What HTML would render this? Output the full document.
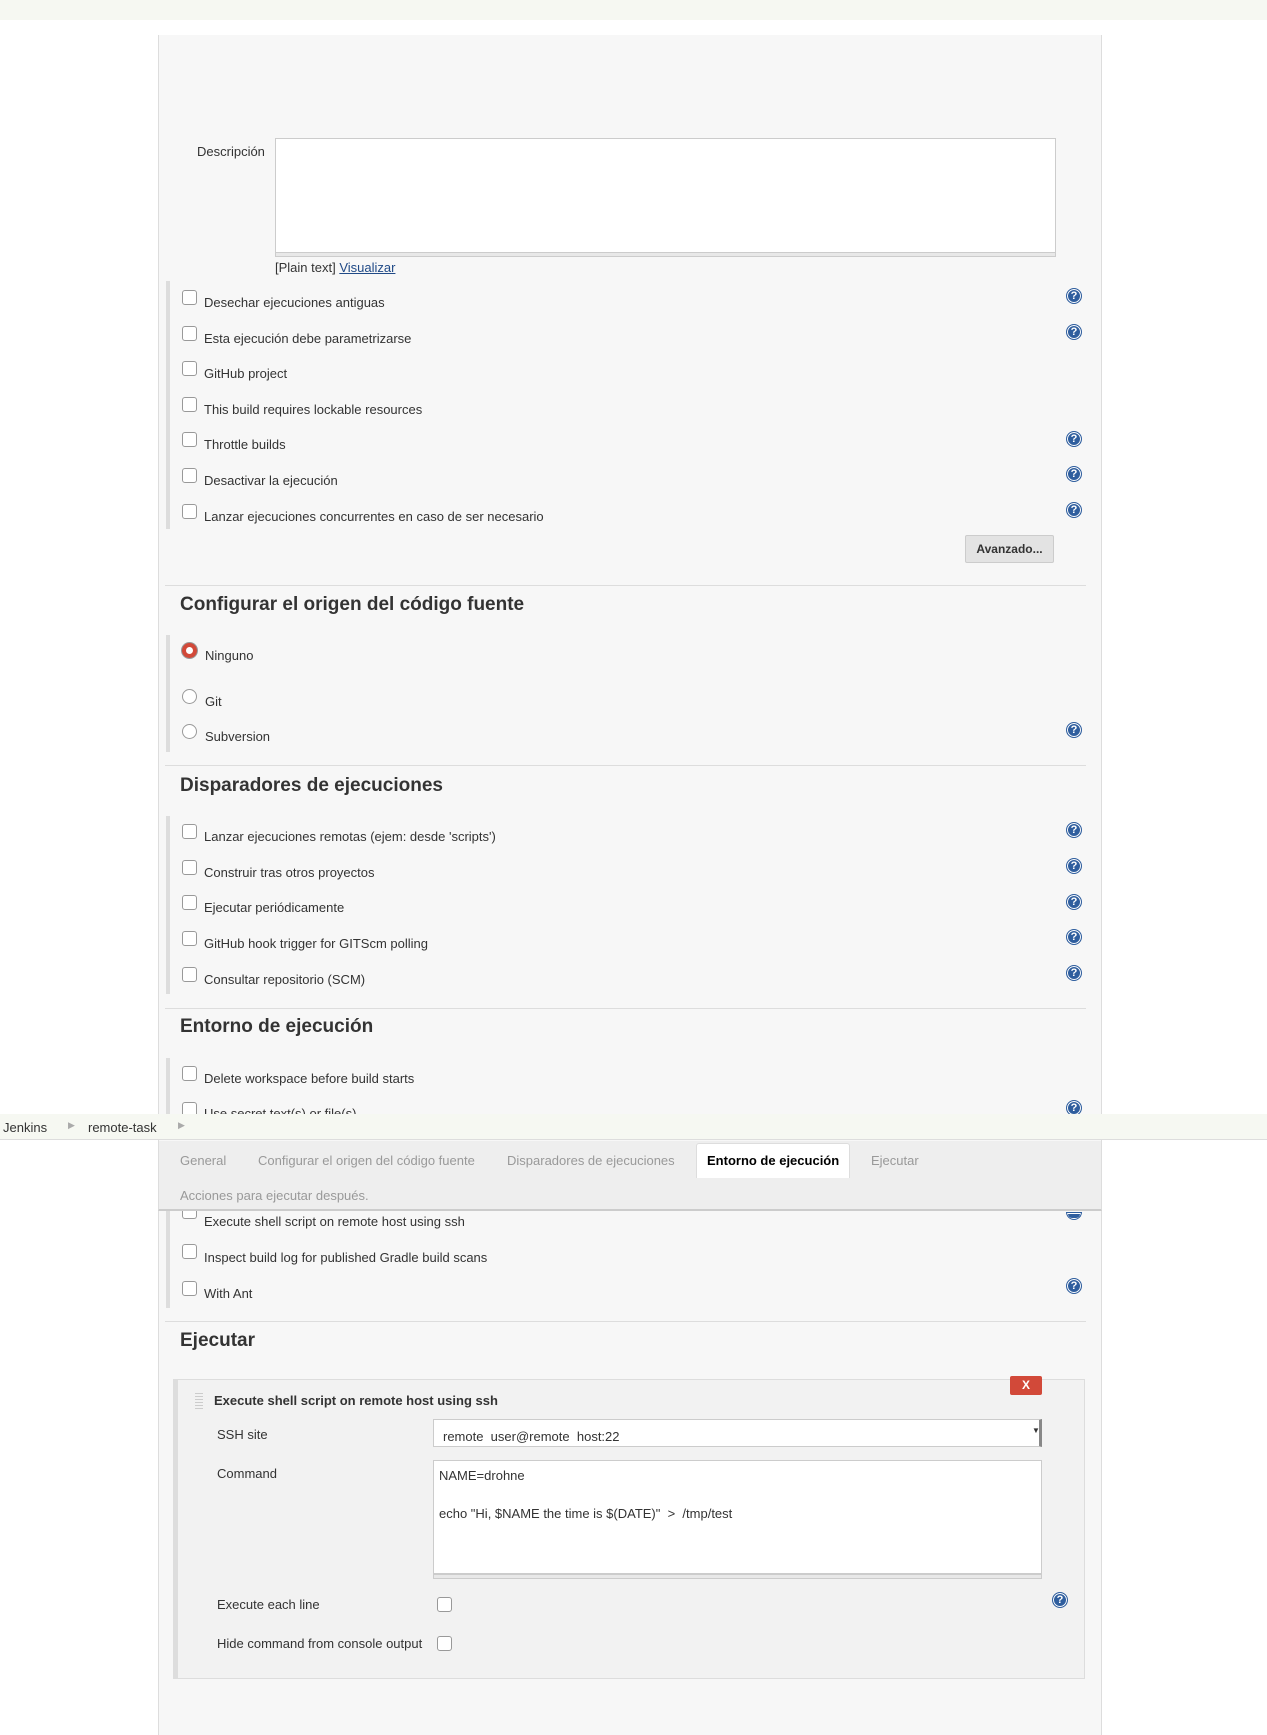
<!DOCTYPE html>
<html><head><meta charset="utf-8"><style>
*{box-sizing:border-box}
body{margin:0;width:1267px;height:1667px;overflow:hidden;background:#fff;font-family:"Liberation Sans",sans-serif;font-size:13px;color:#333;position:relative}
.a{position:absolute}
.top{left:0;top:0;width:1267px;height:20px;background:#f6f8f2}
.panel{left:158px;top:35px;width:944px;height:1700px;background:#f7f7f7;border-left:1px solid #ddd;border-right:1px solid #ddd}
.cb{width:15px;height:15px;border:1px solid #999;border-radius:3px;background:#fff}
.rd{width:15px;height:15px;border:1px solid #999;border-radius:50%;background:#fff}
.help{width:16px;height:16px;border-radius:50%;background:#2f5e9e;border:1px solid #2f5e9e;box-shadow:inset 0 0 0 1px #fff;color:#fff;font-size:11px;font-weight:bold;text-align:center;line-height:14px}
.bar{background:#ddd;width:4px}
.hr{left:165px;width:921px;height:1px;background:#ddd}
h2{position:absolute;margin:0;font-size:19px;font-weight:bold;color:#333}
.ta{background:#fff;border:1px solid #ccc}
</style></head><body>
<div class="a top"></div>
<div class="a panel"></div>
<div class="a" style="left:197px;top:144px">Descripción</div>
<div class="a ta" style="left:275px;top:138px;width:781px;height:118px"></div>
<div class="a" style="left:275px;top:252px;width:781px;height:5px;background:#e8e8e8;border:1px solid #ccc"></div>
<div class="a" style="left:275px;top:260px">[Plain text] <span style="color:#204a87;text-decoration:underline">Visualizar</span></div>
<div class="a bar" style="left:166px;top:281px;height:248px"></div>
<div class="a bar" style="left:166px;top:635px;height:117px"></div>
<div class="a bar" style="left:166px;top:816px;height:178px"></div>
<div class="a bar" style="left:166px;top:1058px;height:60px"></div>
<div class="a bar" style="left:166px;top:1211px;height:97px"></div>

<div class="a cb" style="left:182px;top:290px"></div><div class="a" style="left:204px;top:295px">Desechar ejecuciones antiguas</div><div class="a help" style="left:1066px;top:288px">?</div>
<div class="a cb" style="left:182px;top:326px"></div><div class="a" style="left:204px;top:331px">Esta ejecución debe parametrizarse</div><div class="a help" style="left:1066px;top:324px">?</div>
<div class="a cb" style="left:182px;top:361px"></div><div class="a" style="left:204px;top:366px">GitHub project</div>
<div class="a cb" style="left:182px;top:397px"></div><div class="a" style="left:204px;top:402px">This build requires lockable resources</div>
<div class="a cb" style="left:182px;top:432px"></div><div class="a" style="left:204px;top:437px">Throttle builds</div><div class="a help" style="left:1066px;top:431px">?</div>
<div class="a cb" style="left:182px;top:468px"></div><div class="a" style="left:204px;top:473px">Desactivar la ejecución</div><div class="a help" style="left:1066px;top:466px">?</div>
<div class="a cb" style="left:182px;top:504px"></div><div class="a" style="left:204px;top:509px">Lanzar ejecuciones concurrentes en caso de ser necesario</div><div class="a help" style="left:1066px;top:502px">?</div>
<div class="a" style="left:965px;top:535px;width:89px;height:28px;background:#e3e3e3;border:1px solid #ccc;border-radius:2px;font-weight:bold;font-size:12px;text-align:center;line-height:26px">Avanzado...</div>

<div class="a hr" style="top:585px"></div>
<h2 style="left:180px;top:594px">Configurar el origen del código fuente</h2>
<div class="a rd" style="left:182px;top:643px;border:4px solid #d24939;box-shadow:0 0 0 1px #999"></div><div class="a" style="left:205px;top:648px">Ninguno</div>
<div class="a rd" style="left:182px;top:689px"></div><div class="a" style="left:205px;top:694px">Git</div>
<div class="a rd" style="left:182px;top:724px"></div><div class="a" style="left:205px;top:729px">Subversion</div><div class="a help" style="left:1066px;top:722px">?</div>

<div class="a hr" style="top:765px"></div>
<h2 style="left:180px;top:775px">Disparadores de ejecuciones</h2>
<div class="a cb" style="left:182px;top:824px"></div><div class="a" style="left:204px;top:829px">Lanzar ejecuciones remotas (ejem: desde 'scripts')</div><div class="a help" style="left:1066px;top:822px">?</div>
<div class="a cb" style="left:182px;top:860px"></div><div class="a" style="left:204px;top:865px">Construir tras otros proyectos</div><div class="a help" style="left:1066px;top:858px">?</div>
<div class="a cb" style="left:182px;top:895px"></div><div class="a" style="left:204px;top:900px">Ejecutar periódicamente</div><div class="a help" style="left:1066px;top:894px">?</div>
<div class="a cb" style="left:182px;top:931px"></div><div class="a" style="left:204px;top:936px">GitHub hook trigger for GITScm polling</div><div class="a help" style="left:1066px;top:929px">?</div>
<div class="a cb" style="left:182px;top:967px"></div><div class="a" style="left:204px;top:972px">Consultar repositorio (SCM)</div><div class="a help" style="left:1066px;top:965px">?</div>

<div class="a hr" style="top:1008px"></div>
<h2 style="left:180px;top:1016px">Entorno de ejecución</h2>
<div class="a cb" style="left:182px;top:1066px"></div><div class="a" style="left:204px;top:1071px">Delete workspace before build starts</div>
<div class="a cb" style="left:182px;top:1102px"></div><div class="a" style="left:204px;top:1106px">Use secret text(s) or file(s)</div><div class="a help" style="left:1066px;top:1100px">?</div>

<div class="a" style="left:0;top:1114px;width:1267px;height:26px;background:#f6f8f2;border-bottom:1px solid #ddd"></div>
<div class="a" style="left:3px;top:1120px">Jenkins</div><div class="a" style="left:68px;top:1120px;color:#aaa;font-size:9px">▶</div>
<div class="a" style="left:88px;top:1120px">remote-task</div><div class="a" style="left:178px;top:1120px;color:#aaa;font-size:9px">▶</div>
<div class="a" style="left:158px;top:1141px;width:944px;height:70px;background:#eee;border-bottom:2px solid #ccc;border-left:1px solid #ddd;border-right:1px solid #ddd"></div>
<div class="a" style="left:696px;top:1143px;width:154px;height:35px;background:#fff;border:1px solid #ddd;border-bottom:none;border-radius:3px 3px 0 0"></div>
<div class="a" style="left:180px;top:1153px;color:#999">General</div>
<div class="a" style="left:258px;top:1153px;color:#999">Configurar el origen del código fuente</div>
<div class="a" style="left:507px;top:1153px;color:#999">Disparadores de ejecuciones</div>
<div class="a" style="left:707px;top:1153px;color:#000;font-weight:bold">Entorno de ejecución</div>
<div class="a" style="left:871px;top:1153px;color:#999">Ejecutar</div>
<div class="a" style="left:180px;top:1188px;color:#999">Acciones para ejecutar después.</div>

<div class="a cb" style="left:182px;top:1211px;height:8px;border-top:none;border-radius:0 0 3px 3px"></div><div class="a" style="left:204px;top:1214px">Execute shell script on remote host using ssh</div>
<div class="a help" style="left:1066px;top:1212px;height:8px;border-radius:0 0 8px 8px"></div>
<div class="a cb" style="left:182px;top:1244px"></div><div class="a" style="left:204px;top:1250px">Inspect build log for published Gradle build scans</div>
<div class="a cb" style="left:182px;top:1281px"></div><div class="a" style="left:204px;top:1286px">With Ant</div><div class="a help" style="left:1066px;top:1278px">?</div>

<div class="a hr" style="top:1321px"></div>
<h2 style="left:180px;top:1330px">Ejecutar</h2>
<div class="a" style="left:173px;top:1379px;width:912px;height:300px;background:#f2f2f2;border:1px solid #ddd;border-left:5px solid #ddd"></div>
<div class="a" style="left:1010px;top:1376px;width:32px;height:19px;background:#d24939;color:#fff;font-weight:bold;font-size:12px;text-align:center;line-height:19px;border-radius:2px">X</div>
<div class="a" style="left:195px;top:1393px;width:8px;height:16px;background:repeating-linear-gradient(#ccc 0 1px,transparent 1px 3px)"></div>
<div class="a" style="left:214px;top:1393px;font-weight:bold">Execute shell script on remote host using ssh</div>
<div class="a" style="left:217px;top:1427px">SSH site</div>
<div class="a" style="left:433px;top:1419px;width:609px;height:28px;background:#fff;border:1px solid #ccc;border-right:3px solid #888"></div>
<div class="a" style="left:443px;top:1429px">remote&nbsp; user@remote&nbsp; host:22</div>
<div class="a" style="left:1032px;top:1426px;font-size:8px">▼</div>
<div class="a" style="left:217px;top:1466px">Command</div>
<div class="a ta" style="left:433px;top:1460px;width:609px;height:114px"></div>
<div class="a" style="left:433px;top:1574px;width:609px;height:5px;background:#e8e8e8;border:1px solid #ccc"></div>
<div class="a" style="left:439px;top:1468px">NAME=drohne</div>
<div class="a" style="left:439px;top:1506px">echo "Hi, $NAME the time is $(DATE)"&nbsp; &gt;&nbsp; /tmp/test</div>
<div class="a" style="left:217px;top:1597px">Execute each line</div>
<div class="a cb" style="left:437px;top:1597px"></div>
<div class="a help" style="left:1052px;top:1592px">?</div>
<div class="a" style="left:217px;top:1636px">Hide command from console output</div>
<div class="a cb" style="left:437px;top:1636px"></div>
</body></html>
